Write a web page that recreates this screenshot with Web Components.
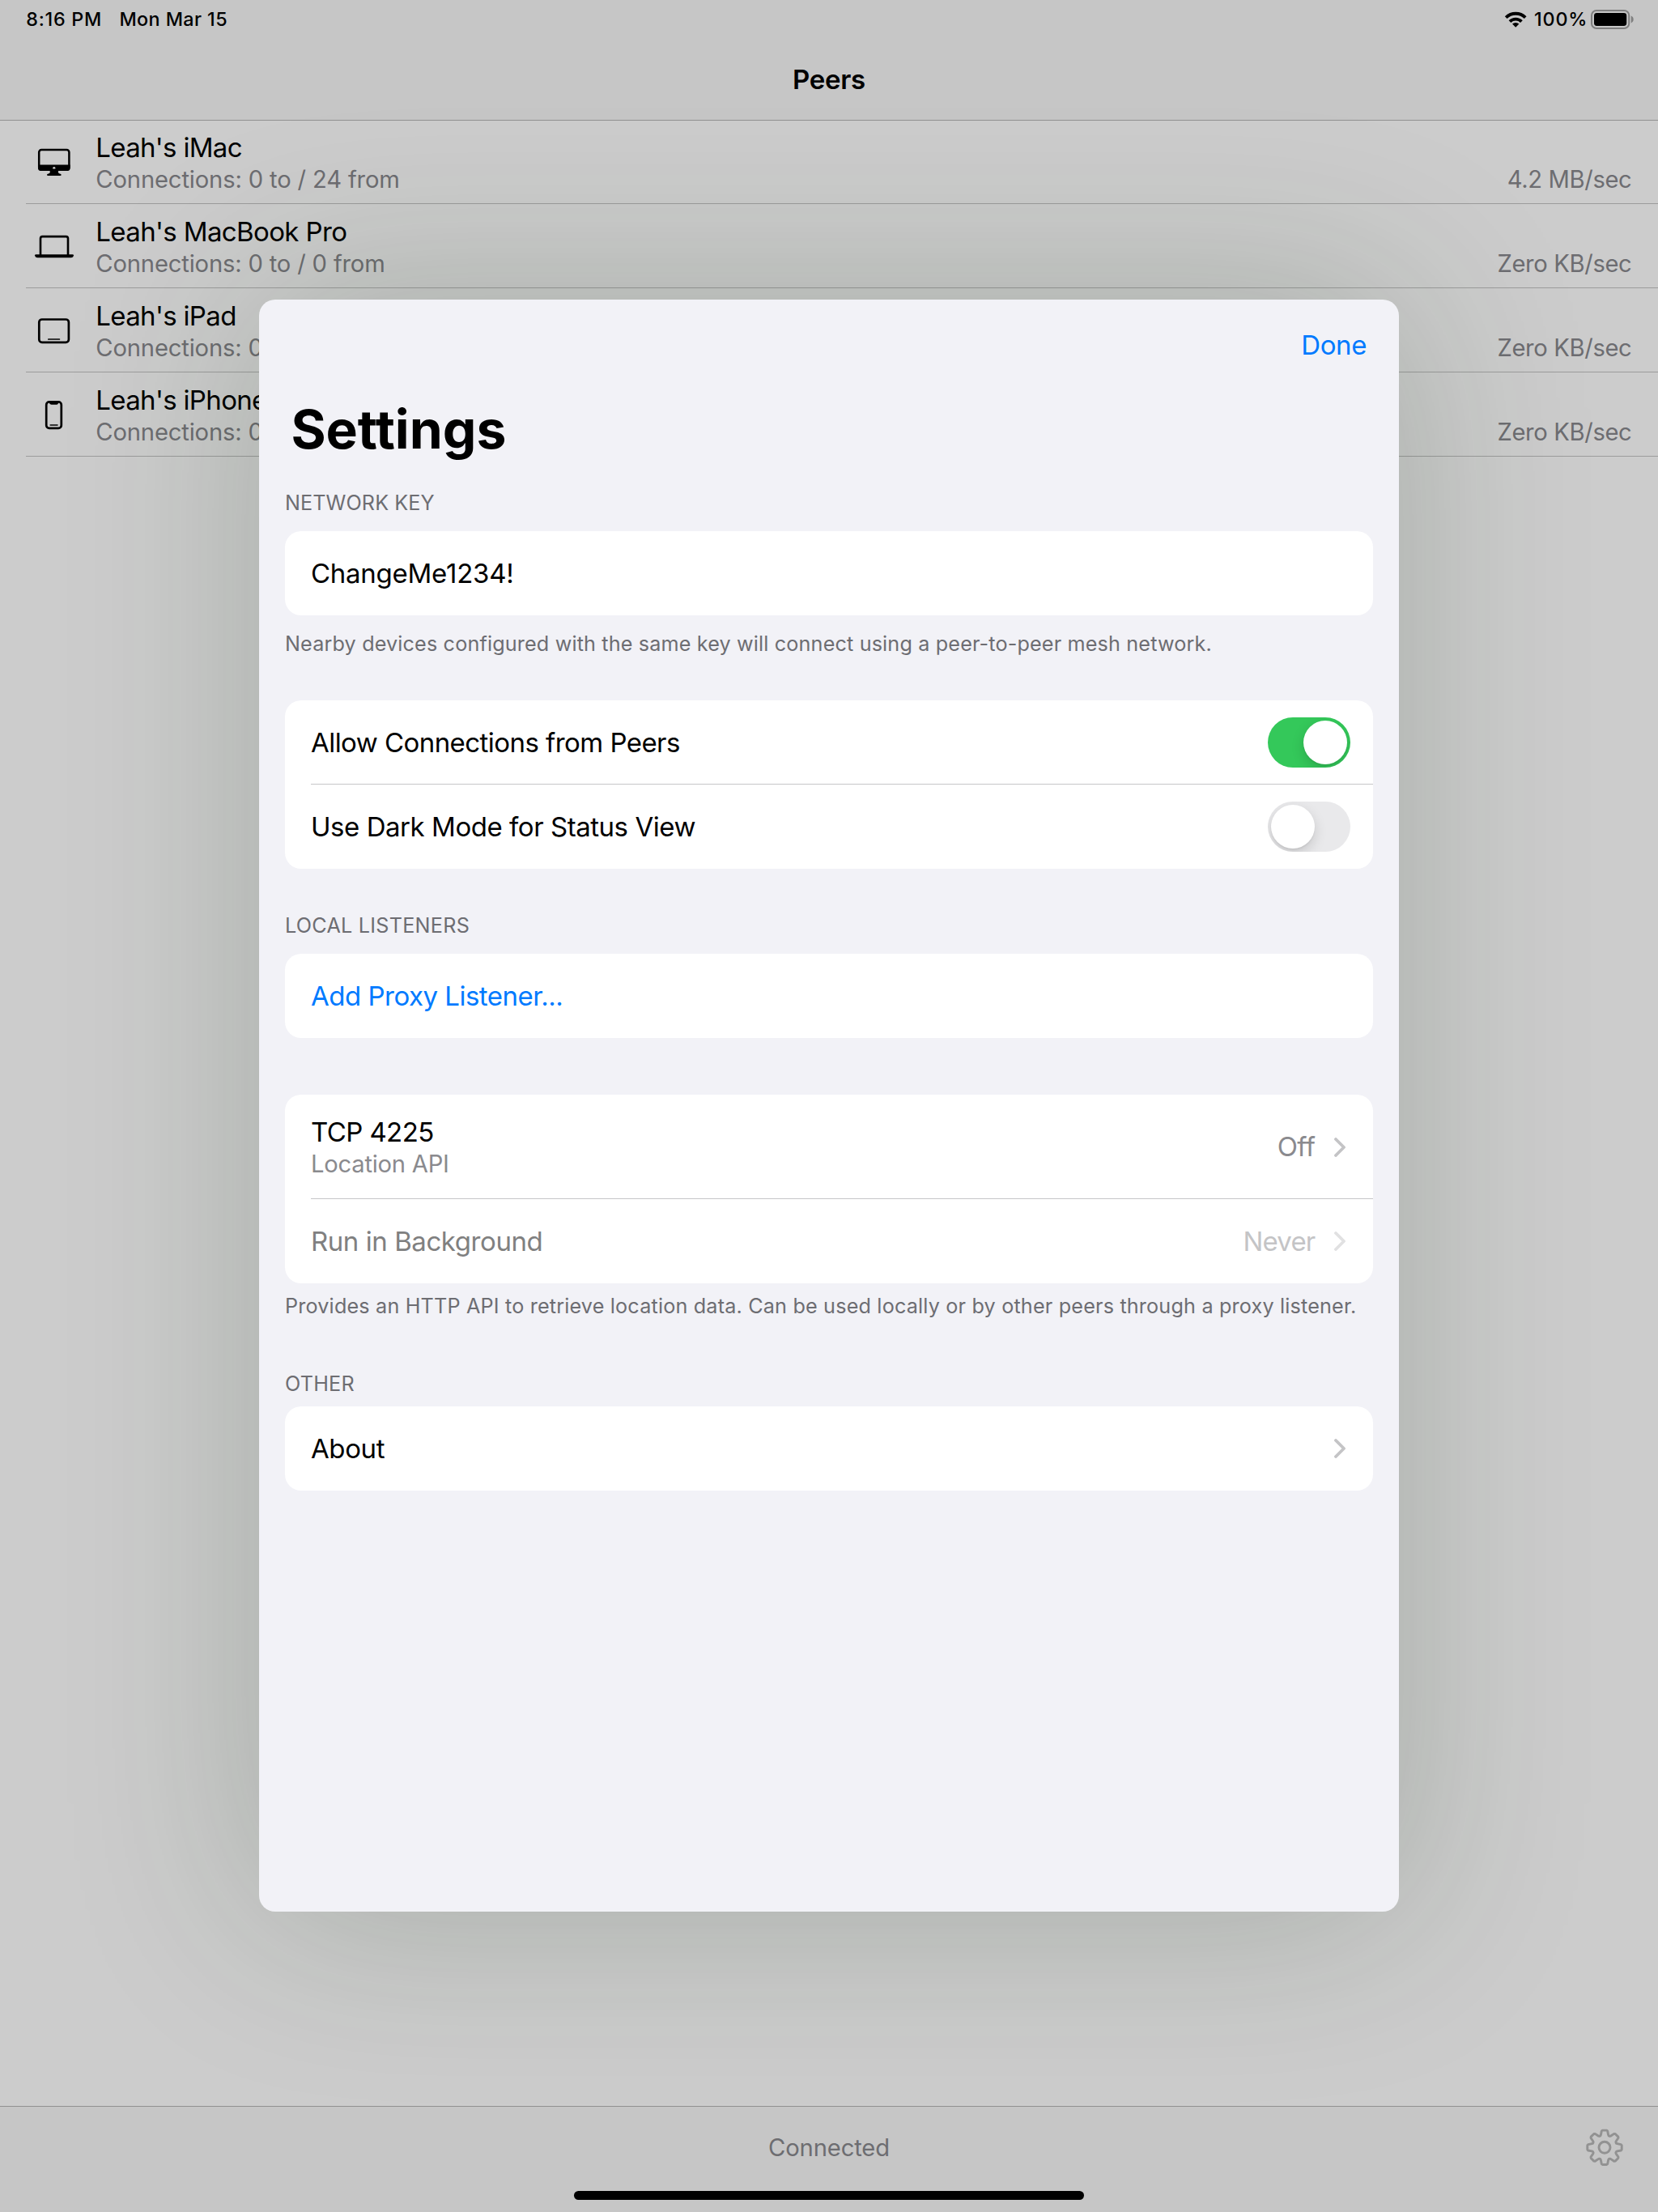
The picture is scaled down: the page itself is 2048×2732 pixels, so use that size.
<!DOCTYPE html>
<html lang="en">
<head>
<meta charset="utf-8">
<title>Peers</title>
<style>
html,body{margin:0;padding:0}
body{width:2048px;height:2732px;overflow:hidden;background:#ccc;color:#000;font-family:Inter,"Liberation Sans",sans-serif}
</style>
</head>
<body>
<peers-app>
  <status-bar slot="top"></status-bar>
  <nav-title slot="top">Peers</nav-title>
  <peer-row icon="imac" rate="4.2 MB/sec" style="--t:-.68px;--s:-.15px;--r:-.38px">Leah's iMac<span slot="sub">Connections: 0 to / 24 from</span></peer-row>
  <peer-row icon="macbook" rate="Zero KB/sec" style="--t:-.63px;--s:-.17px;--r:-.36px">Leah's MacBook Pro<span slot="sub">Connections: 0 to / 0 from</span></peer-row>
  <peer-row icon="ipad" rate="Zero KB/sec" style="--t:-.66px;--s:-.17px;--r:-.36px">Leah's iPad<span slot="sub">Connections: 0</span></peer-row>
  <peer-row icon="iphone" rate="Zero KB/sec" style="--t:-.66px;--s:-.17px;--r:-.36px">Leah's iPhone<span slot="sub">Connections: 0</span></peer-row>
  <tool-bar slot="bottom">Connected</tool-bar>
  <settings-sheet slot="sheet">
    <settings-group>
      <group-label slot="before" style="--h:78px;--pb:19.5px;--ls:.08px">NETWORK KEY</group-label>
      <settings-row style="--ls:-.26px">ChangeMe1234!</settings-row>
      <group-note slot="after" style="--h:105px;--pt:18.5px;--ls:.147px">Nearby devices configured with the same key will connect using a peer-to-peer mesh network.</group-note>
    </settings-group>
    <settings-group>
      <settings-row divided style="--ls:-.55px;--pr:28px">Allow Connections from Peers<toggle-switch slot="end" on></toggle-switch></settings-row>
      <settings-row style="--ls:-.46px;--pr:28px">Use Dark Mode for Status View<toggle-switch slot="end"></toggle-switch></settings-row>
    </settings-group>
    <settings-group>
      <group-label slot="before" style="--h:105px;--pb:19.5px;--ls:.24px">LOCAL LISTENERS</group-label>
      <settings-row style="--ls:-.5px;--c:#007aff">Add Proxy Listener...</settings-row>
    </settings-group>
    <settings-group style="--mt:70px">
      <settings-row divided style="--h:129px;--ls:-.6px;--sls:-.24px;--mp:1px">TCP 4225<span slot="sub">Location API</span><value-link slot="end" style="--ls:-.5px;--vp:2px">Off</value-link></settings-row>
      <settings-row style="--ls:-.44px;--c:#808080">Run in Background<value-link slot="end" style="--ls:-.8px;--c:#c4c4c6;--chev:#e1e1e2">Never</value-link></settings-row>
      <group-note slot="after" style="--h:76px;--pt:12px;--ls:.173px">Provides an HTTP API to retrieve location data. Can be used locally or by other peers through a proxy listener.</group-note>
    </settings-group>
    <settings-group>
      <group-label slot="before" style="--h:76px;--pb:12.5px;--ls:.2px">OTHER</group-label>
      <settings-row style="--ls:-.4px">About<value-link slot="end"></value-link></settings-row>
    </settings-group>
  </settings-sheet>
</peers-app>
<script>
function define(name, html) {
  customElements.define(name, class extends HTMLElement {
    connectedCallback() {
      if (this.shadowRoot) return;
      const root = this.attachShadow({ mode: 'open' });
      root.innerHTML = typeof html === 'function' ? html(this) : html;
    }
  });
}

define('peers-app', `<style>
:host{display:flex;flex-direction:column;width:2048px;height:2732px;position:relative}
header{height:148px;background:#c6c6c6;border-bottom:1px solid #919191;display:flex;flex-direction:column;flex:none}
main{flex:1;margin-top:-1px;display:flex;flex-direction:column}
</style>
<header><slot name="top"></slot></header>
<main><slot></slot></main>
<slot name="bottom"></slot>
<slot name="sheet"></slot>`);

define('status-bar', `<style>
:host{display:flex;height:48px;align-items:center;padding:0 30px 0 32.3px;font-size:23.3px;font-weight:500;line-height:28px}
.time{letter-spacing:.75px;margin-right:21.4px}
.date{letter-spacing:.42px;flex:1}
.pct{letter-spacing:.9px;margin:0 2.6px 0 9.3px}
svg{display:block}
</style>
<span class="time">8:16 PM</span><span class="date">Mon Mar 15</span>
<svg width="28" height="48" viewBox="1859 0 28 48" fill="none" stroke="#000" stroke-width="3.9">
<path d="M1861.2 21.6A17.3 17.3 0 0 1 1885.2 21.6"/><path d="M1866 26.6A10.2 10.2 0 0 1 1880.4 26.6"/>
<path d="M1873.2 33.8L1869 29.6A6 6 0 0 1 1877.4 29.6Z" fill="#000" stroke="none"/></svg>
<span class="pct">100%</span>
<svg width="54" height="48" viewBox="1964 0 54 48"><rect x="1966" y="13" width="46.2" height="22" rx="6" fill="none" stroke="#7f7f7f" stroke-width="2"/><rect x="1969" y="16" width="40.2" height="16" rx="3.4"/><path d="M2014.7 19.6q3 1.4 3 4.4t-3 4.4z" fill="#7f7f7f"/></svg>`);

define('nav-title', `<style>
:host{display:flex;height:100px;align-items:center;justify-content:center;font-size:33px;font-weight:600;line-height:40px;letter-spacing:-.3px}
</style><slot></slot>`);

const DEVICES = {
  imac: `<rect x="48.2" y="185" width="37.2" height="24.8" rx="3" fill="none" stroke="#000" stroke-width="2.5"/>
<path fill-rule="evenodd" d="M47 203.6H86.6V207.5Q86.6 211 83 211H72v2.2q.4 1 1.8 1.3 1.9.3 1.9 1.4t-1.4 1.2H59.4q-1.4-.1-1.4-1.2t1.9-1.4q1.4-.3 1.8-1.3V211H50.6Q47 211 47 207.5ZM66.8 206.1a1.7 1.7 0 1 0 .01 0Z"/>`,
  macbook: `<path d="M50 211V190.6Q50 188.1 52.5 188.1H81.5Q84 188.1 84 190.6V211" fill="none" stroke="#000" stroke-width="2.6"/>
<path d="M44.4 210.3H89.6Q91 210.3 91 211.6Q90.6 214.2 88 214.2H46Q43.4 214.2 43 211.6Q43 210.3 44.4 210.3Z"/>`,
  ipad: `<rect x="48.3" y="186.5" width="36.6" height="28.4" rx="3.6" fill="none" stroke="#000" stroke-width="2.7"/>
<path d="M59.8 211H73.4" stroke="#000" stroke-width="1.7" stroke-linecap="round"/>`,
  iphone: `<rect x="57.2" y="184.3" width="18.6" height="32.6" rx="3.6" fill="none" stroke="#000" stroke-width="2.7"/>
<path d="M61 184.5H72V186Q71.6 187.7 70 187.7H63.6Q61.8 187.7 61 186Z"/><path d="M62.2 213.1H71" stroke="#000" stroke-width="1.5" stroke-linecap="round"/>`
};

define('peer-row', el => `<style>
:host{display:flex;height:104px;margin-left:32px;box-shadow:inset 0 -1px #9c9c9c;box-sizing:border-box;flex:none}
svg{display:block;flex:none;width:86.3px;height:104px}
.main{flex:1;padding-top:14px}
.t{font-size:33px;line-height:40px;letter-spacing:var(--t)}
.s,.r{font-size:29.2px;line-height:39px;color:#6d6d71;white-space:nowrap}
.s{letter-spacing:var(--s)}
.r{letter-spacing:var(--r);padding:54px 32.6px 0 0}
</style>
<svg viewBox="32 148 86.3 104">${DEVICES[el.getAttribute('icon')]}</svg>
<div class="main"><div class="t"><slot></slot></div><div class="s"><slot name="sub"></slot></div></div>
<div class="r">${el.getAttribute('rate')}</div>`);

/* Cog outline: eight trapezoid teeth around the hub. */
function cogPath() {
  let d = '';
  for (let k = 0; k < 8; k++) {
    const a = k * Math.PI / 4, c = Math.cos(a), s = Math.sin(a);
    for (const [x, y] of [[-5.2, -14.4], [-4.6, -15.6], [-3.7, -20.3], [-2.6, -21.2], [2.6, -21.2], [3.7, -20.3], [4.6, -15.6], [5.2, -14.4]])
      d += (d ? 'L' : 'M') + (x * c - y * s).toFixed(2) + ' ' + (x * s + y * c).toFixed(2);
  }
  return d + 'Z';
}

define('tool-bar', () => `<style>
:host{display:flex;flex-direction:column;flex:none;height:130px;background:#c6c6c6;border-top:1px solid #919191}
.bar{height:100px;display:grid;grid-template-columns:1fr auto 1fr;align-items:center;font-size:29.2px;line-height:38px;letter-spacing:-.15px;color:#6d6d71}
.bar span{padding-top:2px}
svg{justify-self:end;margin-right:42.3px;display:block}
.home{width:630px;height:11px;border-radius:5.5px;background:#000;margin:4px auto 0}
</style>
<div class="bar"><i></i><span><slot></slot></span>
<svg width="48" height="48" viewBox="-24 -24.3 48 48" fill="none" stroke="#929292" stroke-width="2.9" stroke-linejoin="round"><path d="${cogPath()}"/><circle r="7"/></svg></div>
<div class="home"></div>`);

define('settings-sheet', `<style>
:host{position:absolute;left:320px;top:370px;width:1408px;height:1991px;box-sizing:border-box;border-radius:20px;background:#f2f2f7;box-shadow:0 0 236px rgba(22,54,24,.21);display:flex;flex-direction:column}
nav{height:112px;display:flex;align-items:center;justify-content:flex-end;padding-right:40px;font-size:33px;line-height:40px;letter-spacing:-.4px;color:#007aff}
h1{margin:0;height:96px;line-height:96px;font-size:66px;font-weight:700;padding-left:39.4px;letter-spacing:-.03px}
.body{padding:0 32px}
</style><nav>Done</nav><h1>Settings</h1><div class="body"><slot></slot></div>`);

define('settings-group', `<style>
:host{display:block;margin-top:var(--mt,0)}
.card{background:#fff;border-radius:20px}
</style><slot name="before"></slot><div class="card"><slot></slot></div><slot name="after"></slot>`);

define('group-label', `<style>
:host{display:flex;align-items:flex-end;box-sizing:border-box;height:var(--h);padding-bottom:var(--pb);font-size:25.2px;line-height:32px;color:#6d6d72;letter-spacing:var(--ls,.03px)}
</style><slot></slot>`);

define('group-note', `<style>
:host{display:block;box-sizing:border-box;height:var(--h);padding-top:var(--pt);font-size:25.2px;line-height:32px;color:#6d6d72;letter-spacing:var(--ls);white-space:nowrap}
</style><slot></slot>`);

define('settings-row', el => `<style>
:host{display:flex;align-items:center;height:var(--h,104px);margin-left:32px;padding-right:var(--pr,34px);font-size:33px;line-height:40px;color:var(--c,#000)}
:host([divided]){box-shadow:inset 0 -1px #c6c6c8}
.main{flex:1;letter-spacing:var(--ls);padding-top:var(--mp,0)}
.sub{font-size:29.2px;line-height:39px;color:#8a8a8e;letter-spacing:var(--sls)}
</style><div class="main"><slot></slot>${el.querySelector('[slot=sub]') ? '<div class="sub"><slot name="sub"></slot></div>' : ''}</div><slot name="end"></slot>`);

define('value-link', `<style>
:host{display:flex;align-items:center;gap:23.5px;letter-spacing:var(--ls);color:var(--c,#8a8a8e)}
span{padding-bottom:var(--vp,0)}
svg{display:block}
</style><span><slot></slot></span><svg width="14" height="24" viewBox="0 0 14 24" fill="none"><path d="M2 2L12 12L2 22" stroke="var(--chev,#c4c4c6)" stroke-width="3.8" stroke-linecap="round" stroke-linejoin="round"/></svg>`);

define('toggle-switch', `<style>
:host{display:flex;width:102px;height:62px;box-sizing:border-box;padding:4px;border-radius:31px;background:#e9e9eb;overflow:hidden}
:host([on]){background:#34c85a;justify-content:flex-end}
i{width:54px;height:54px;border-radius:50%;background:#fff;box-shadow:0 6px 16px rgba(0,0,0,.15),0 2px 2px rgba(0,0,0,.05)}
</style><i></i>`);
</script>
</body>
</html>
